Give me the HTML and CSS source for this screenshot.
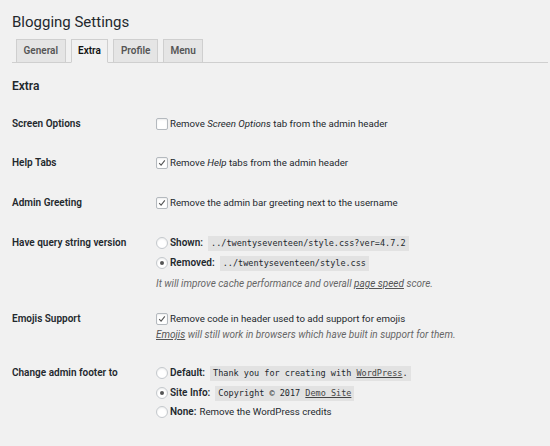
FILE: index.html
```html
<!DOCTYPE html>
<html lang="en">
<head>
<meta charset="utf-8">
<title>Blogging Settings</title>
<link rel="stylesheet" href="styles.css">
</head>
<body>
<div class="wrap">
  <h1 class="title">Blogging Settings</h1>
  <nav class="tabs">
    <a class="tab">General</a>
    <a class="tab active">Extra</a>
    <a class="tab">Profile</a>
    <a class="tab">Menu</a>
  </nav>
  <h2 class="section">Extra</h2>
  <div class="form">
    <div class="row row-first">
      <div class="label">Screen Options</div>
      <div class="field">
        <div class="line"><span class="cb"></span><span>Remove <em>Screen Options</em> tab from the admin header</span></div>
      </div>
    </div>
    <div class="row">
      <div class="label">Help Tabs</div>
      <div class="field">
        <div class="line"><span class="cb checked"><svg viewBox="0 0 12 12"><polyline points="2.6,6.2 4.9,8.6 9.4,2.8"/></svg></span><span>Remove <em>Help</em> tabs from the admin header</span></div>
      </div>
    </div>
    <div class="row">
      <div class="label">Admin Greeting</div>
      <div class="field">
        <div class="line"><span class="cb checked"><svg viewBox="0 0 12 12"><polyline points="2.6,6.2 4.9,8.6 9.4,2.8"/></svg></span><span>Remove the admin bar greeting next to the username</span></div>
      </div>
    </div>
    <div class="row row-query">
      <div class="label">Have query string version</div>
      <div class="field">
        <div class="line"><span class="rd"></span><b class="opt">Shown:</b><code>../twentyseventeen/style.css?ver=4.7.2</code></div>
        <div class="line gap"><span class="rd on"></span><b class="opt">Removed:</b><code>../twentyseventeen/style.css</code></div>
        <p class="desc desc-query">It will improve cache performance and overall <a class="link">page speed</a> score.</p>
      </div>
    </div>
    <div class="row">
      <div class="label">Emojis Support</div>
      <div class="field">
        <div class="line"><span class="cb checked"><svg viewBox="0 0 12 12"><polyline points="2.6,6.2 4.9,8.6 9.4,2.8"/></svg></span><span>Remove code in header used to add support for emojis</span></div>
        <p class="desc"><a class="link">Emojis</a> will still work in browsers which have built in support for them.</p>
      </div>
    </div>
    <div class="row">
      <div class="label">Change admin footer to</div>
      <div class="field">
        <div class="line"><span class="rd"></span><b class="opt">Default:</b><code>Thank you for creating with <span class="ul">WordPress</span>.</code></div>
        <div class="line gap"><span class="rd on"></span><b class="opt">Site Info:</b><code>Copyright © 2017 <span class="ul">Demo Site</span></code></div>
        <div class="line gap1"><span class="rd"></span><b class="opt tight">None:</b><span>Remove the WordPress credits</span></div>
      </div>
    </div>
  </div>
</div>
</body>
</html>
```
FILE: styles.css
```css
html, body {
  margin: 0;
  padding: 0;
  background: #f1f1f1;
}
body {
  font-family: Roboto, "Liberation Sans", sans-serif;
  color: #23282d;
  font-size: 9.7px;
}
.wrap {
  padding-left: 12px;
  padding-right: 2px;
}
.title {
  margin: 0;
  padding-top: 11px;
  font-size: 15px;
  line-height: 22px;
  font-weight: 400;
  color: #23282d;
}
.tabs {
  display: flex;
  gap: 5px;
  margin-top: 6px;
  padding-left: 4px;
  height: 23px;
  border-bottom: 1px solid #cfcfcf;
}
.tab {
  display: block;
  box-sizing: border-box;
  height: 24px;
  padding: 0 6.5px;
  line-height: 22px;
  font-size: 10px;
  font-weight: 600;
  color: #555;
  background: #e5e5e5;
  border: 1px solid #cfcfcf;
  margin-bottom: -1px;
}
.tab.active {
  background: #f1f1f1;
  color: #111;
  border-bottom-color: #f1f1f1;
}
.section {
  margin: 15px 0 0;
  font-size: 12px;
  line-height: 16px;
  font-weight: 600;
  color: #23282d;
}
.form {
  margin-top: 10px;
}
.row {
  display: flex;
  padding: 11px 0;
}
.row-first {
  padding-bottom: 10px;
}
.row-query {
  padding-bottom: 8px;
}
.label {
  width: 144px;
  flex: none;
  line-height: 18px;
  font-size: 10px;
  font-weight: 600;
  color: #23282d;
}
.field {
  flex: 1;
}
.line {
  display: flex;
  align-items: center;
  height: 18px;
  line-height: 18px;
  white-space: nowrap;
}
.line.gap { margin-top: 2px; }
.line.gap1 { margin-top: 1px; }
.cb {
  box-sizing: border-box;
  width: 12px;
  height: 12px;
  margin-right: 2px;
  border: 1px solid #b4b9be;
  border-radius: 2px;
  background: #fff;
  box-shadow: inset 0 1px 2px rgba(0,0,0,.08);
  display: flex;
  flex: none;
}
.cb svg {
  width: 10px;
  height: 10px;
  fill: none;
  stroke: #555;
  stroke-width: 1.3;
}
.rd {
  box-sizing: border-box;
  width: 12px;
  height: 12px;
  margin-right: 2px;
  border: 1px solid #c4c8cc;
  border-radius: 50%;
  background: #fff;
  box-shadow: inset 0 1px 2px rgba(0,0,0,.08);
  position: relative;
  flex: none;
}
.rd.on::after {
  content: "";
  position: absolute;
  left: 3px;
  top: 3px;
  width: 4px;
  height: 4px;
  border-radius: 50%;
  background: #555;
}
em { font-style: italic; }
.opt {
  font-weight: 600;
  font-size: 10px;
  margin-right: 5px;
}
.opt.tight { margin-right: 3px; }
code {
  font-family: "DejaVu Sans Mono", monospace;
  font-size: 8.5px;
  line-height: 11px;
  padding: 2px 3px;
  background: rgba(0,0,0,.06);
  color: #23282d;
}
.ul { text-decoration: underline; color: #444; }
.desc {
  margin: 0;
  font-style: italic;
  font-size: 10px;
  line-height: 14px;
  color: #666;
  white-space: nowrap;
}
.desc-query { margin-top: 5px; }
.link {
  text-decoration: underline;
  color: #555;
}
```
